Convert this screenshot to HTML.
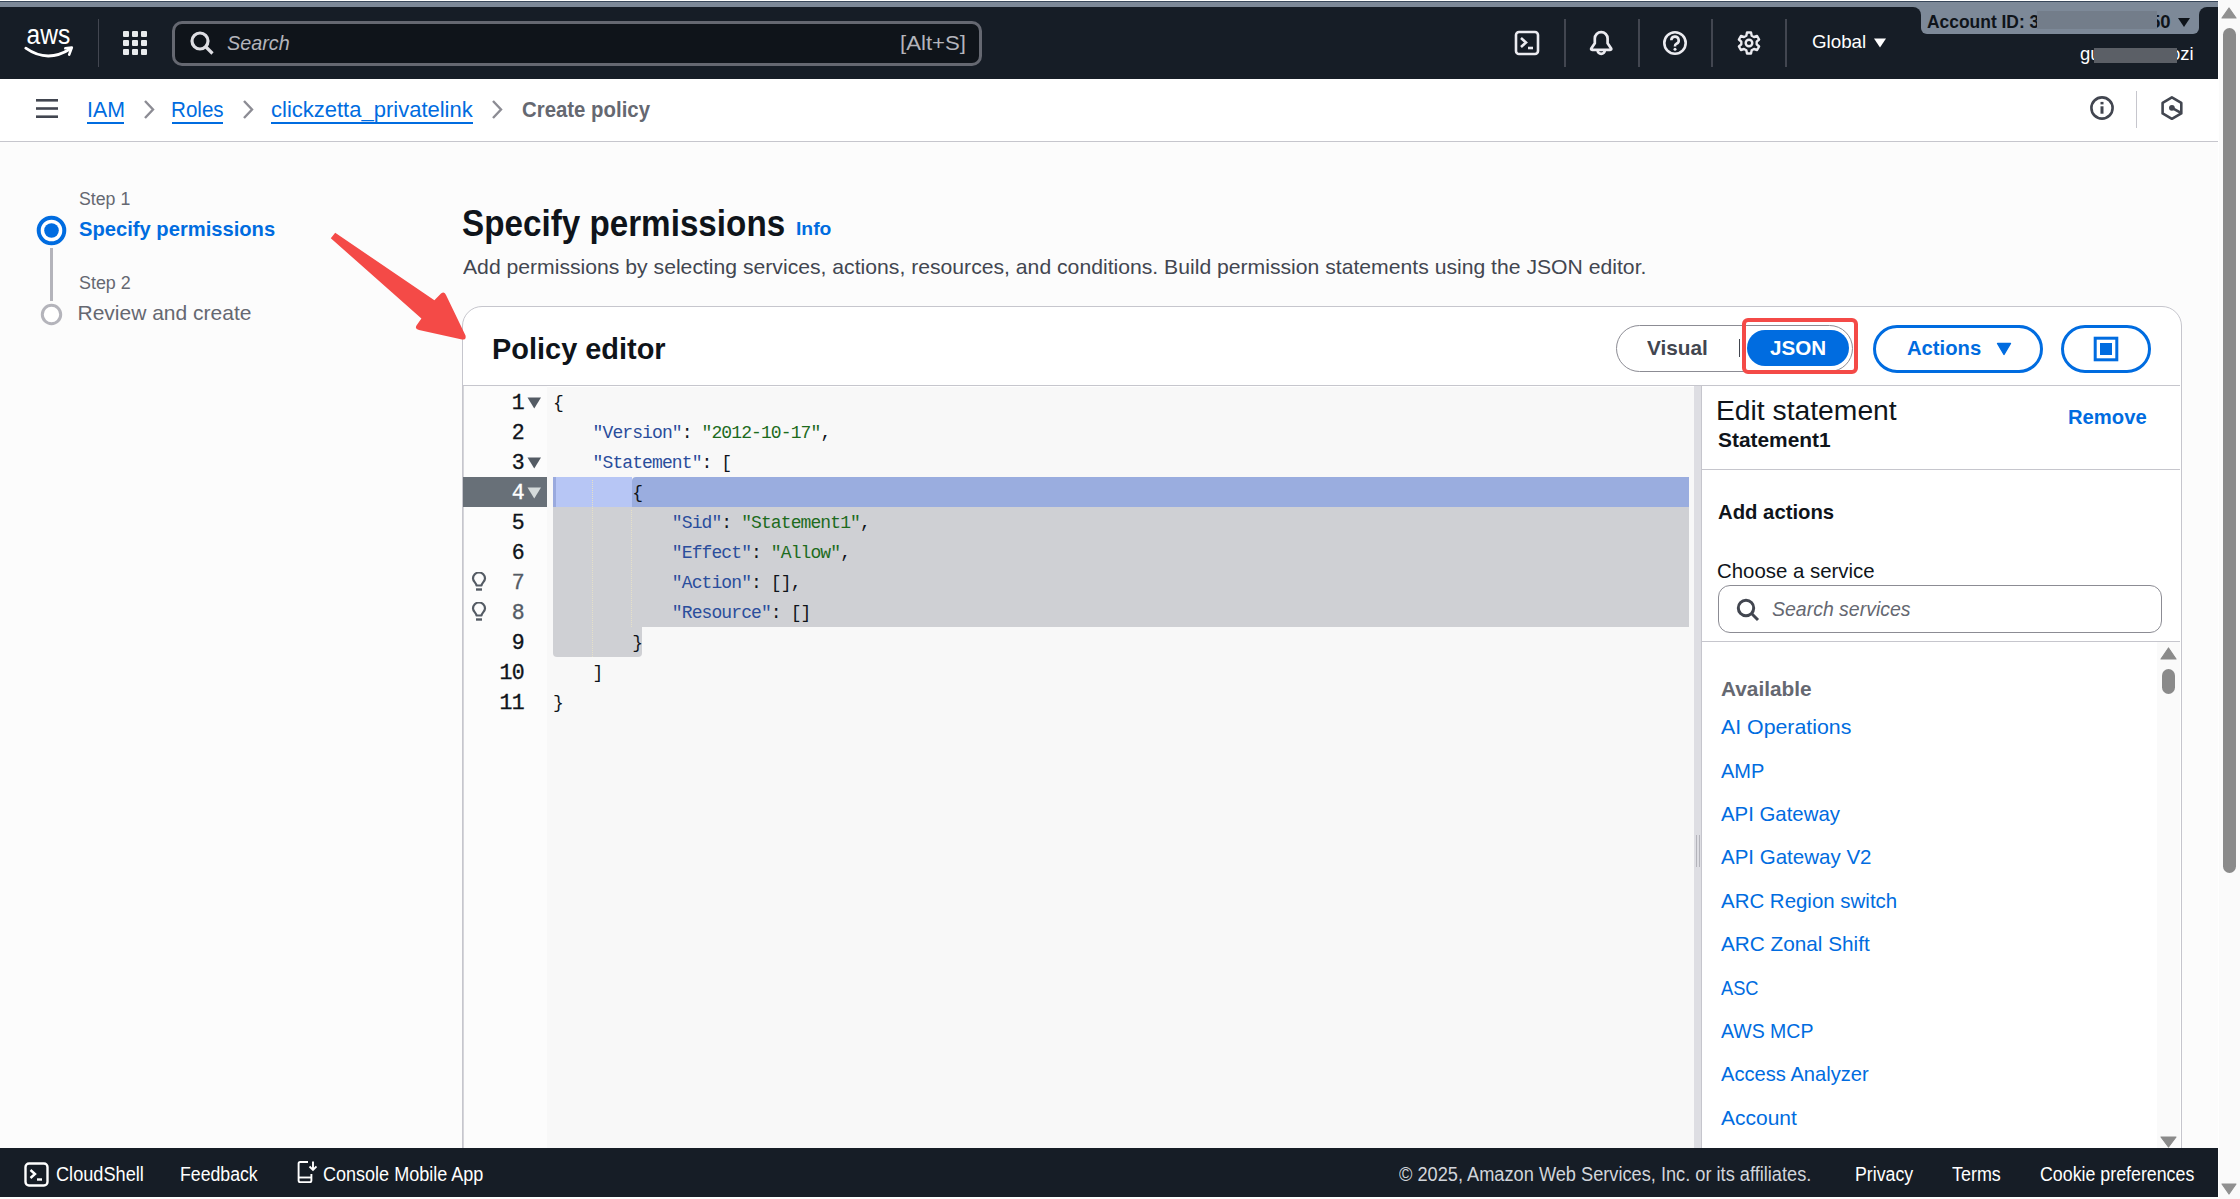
<!DOCTYPE html>
<html><head><meta charset="utf-8">
<style>
*{margin:0;padding:0;box-sizing:border-box}
html,body{width:2240px;height:1199px;overflow:hidden;background:#fcfcfc;font-family:"Liberation Sans",sans-serif}
.a{position:absolute}
.t{position:absolute;white-space:nowrap;line-height:1}
.cl{position:absolute;left:553px;height:30px;line-height:33.2px;font-family:"Liberation Mono",monospace;font-size:18px;letter-spacing:-0.9px;white-space:pre;color:#0f141a}
.ck{color:#2a4d9c}.cs{color:#1d6b1d}.cp{color:#0f141a}
.gn{position:absolute;left:464px;width:60px;height:30px;line-height:33px;text-align:right;font-family:"Liberation Mono",monospace;font-size:21.5px;letter-spacing:-0.6px;-webkit-text-stroke:0.35px currentColor}
</style></head>
<body>
<!-- top gray band -->
<div class="a" style="left:0;top:0;width:2240px;height:1px;background:#ffffff"></div>
<div class="a" style="left:0;top:1px;width:2218px;height:1px;background:#38475a"></div>
<div class="a" style="left:0;top:2px;width:2218px;height:5px;background:#7d8998"></div>
<!-- nav -->
<div class="a" style="left:0;top:7px;width:2218px;height:72px;background:#161d26"></div>
<!-- account badge -->
<div class="a" style="left:1913px;top:7px;width:294px;height:10px;background:#7d8998"></div>
<div class="a" style="left:1905px;top:7px;width:16px;height:16px;background:#161d26;border-top-right-radius:8px"></div>
<div class="a" style="left:2199px;top:7px;width:16px;height:16px;background:#161d26;border-top-left-radius:8px"></div>
<div class="a" style="left:1921px;top:7px;width:278px;height:27px;background:#7d8998;border-radius:0 0 6px 6px"></div>
<svg class="a" style="left:2178px;top:18px" width="12" height="9" viewBox="0 0 12 9"><path d="M0 0H12L6 9Z" fill="#0f141a"/></svg>
<!-- aws logo -->
<svg class="a" style="left:24px;top:27px" width="52" height="32" viewBox="0 0 52 32">
<text x="2.5" y="16.8" font-family="Liberation Sans" font-size="27" fill="#fff" textLength="43.7" lengthAdjust="spacingAndGlyphs">aws</text>
<path d="M1.8 21.2 Q23.5 36.5 46.5 21.8" stroke="#fff" stroke-width="2.8" fill="none" stroke-linecap="round"/>
<path d="M41.3 21.3 L47.8 20.6 L45.2 27.6" stroke="#fff" stroke-width="2.6" fill="none" stroke-linecap="round" stroke-linejoin="round"/>
</svg>
<div class="a" style="left:98px;top:19px;width:1px;height:48px;background:#424650"></div>
<!-- grid icon -->
<svg class="a" style="left:122px;top:30px" width="26" height="26" viewBox="0 0 26 26">
<g fill="#e9ebed">
<rect x="1" y="1" width="6" height="6" rx="1"/><rect x="10" y="1" width="6" height="6" rx="1"/><rect x="19" y="1" width="6" height="6" rx="1"/>
<rect x="1" y="10" width="6" height="6" rx="1"/><rect x="10" y="10" width="6" height="6" rx="1"/><rect x="19" y="10" width="6" height="6" rx="1"/>
<rect x="1" y="19" width="6" height="6" rx="1"/><rect x="10" y="19" width="6" height="6" rx="1"/><rect x="19" y="19" width="6" height="6" rx="1"/>
</g></svg>
<!-- search box -->
<div class="a" style="left:172px;top:21px;width:810px;height:45px;background:#0f141a;border:3px solid #656871;border-radius:10px"></div>
<svg class="a" style="left:189px;top:30px" width="27" height="27" viewBox="0 0 27 27"><circle cx="11" cy="11" r="8" stroke="#dedee3" stroke-width="3.2" fill="none"/><path d="M16.5 16.5L23.5 23.5" stroke="#dedee3" stroke-width="3.2"/></svg>
<!-- right nav icons -->
<svg class="a" style="left:1514px;top:30px" width="26" height="26" viewBox="0 0 26 26"><rect x="2" y="2" width="22" height="22" rx="3" stroke="#ebebf0" stroke-width="2.6" fill="none"/><path d="M7 8L12 12.5L7 17" stroke="#ebebf0" stroke-width="2.6" fill="none"/><path d="M14 18H19" stroke="#ebebf0" stroke-width="2.6"/></svg>
<div class="a" style="left:1563.5px;top:19px;width:2px;height:48px;background:#424650"></div>
<svg class="a" style="left:1588px;top:30px" width="26" height="26" viewBox="0 0 26 26"><path d="M6.8 13.2V8.6A6.4 6.4 0 0 1 19.6 8.6V13.2L23 18.2Q23.9 19.8 22.2 19.8H4.2Q2.5 19.8 3.4 18.2Z" stroke="#ebebf0" stroke-width="2.7" fill="none" stroke-linejoin="round"/><path d="M9.6 20.2A3.6 3.6 0 0 0 16.8 20.2" stroke="#ebebf0" stroke-width="2.7" fill="none"/></svg>
<div class="a" style="left:1638px;top:19px;width:2px;height:48px;background:#424650"></div>
<svg class="a" style="left:1662px;top:30px" width="26" height="26" viewBox="0 0 26 26"><circle cx="13" cy="13" r="10.7" stroke="#ebebf0" stroke-width="2.6" fill="none"/><path d="M9.3 10.3a3.7 3.7 0 1 1 5.2 3.4c-1 .5-1.5 1.2-1.5 2.3v.6" stroke="#ebebf0" stroke-width="2.6" fill="none"/><circle cx="13" cy="19.3" r="1.5" fill="#ebebf0"/></svg>
<div class="a" style="left:1711px;top:19px;width:2px;height:48px;background:#424650"></div>
<svg class="a" style="left:1736px;top:30px" width="26" height="26" viewBox="0 0 26 26"><path d="M11 2.5h4l.7 3.2 2.3 1.3 3.1-1 2 3.5-2.4 2.2v2.6l2.4 2.2-2 3.5-3.1-1-2.3 1.3-.7 3.2h-4l-.7-3.2-2.3-1.3-3.1 1-2-3.5 2.4-2.2v-2.6L2.9 9.5l2-3.5 3.1 1 2.3-1.3Z" stroke="#ebebf0" stroke-width="2.4" fill="none" stroke-linejoin="round"/><circle cx="13" cy="13" r="3.3" stroke="#ebebf0" stroke-width="2.4" fill="none"/></svg>
<div class="a" style="left:1785px;top:19px;width:2px;height:48px;background:#424650"></div>
<svg class="a" style="left:1874px;top:38px" width="12" height="10" viewBox="0 0 12 10"><path d="M0 0.5H12L6 9.5Z" fill="#fff"/></svg>

<!-- breadcrumb bar -->
<div class="a" style="left:0;top:79px;width:2218px;height:63px;background:#fff;border-bottom:1px solid #c6c6cd"></div>
<svg class="a" style="left:36px;top:99px" width="22" height="19" viewBox="0 0 22 19"><g fill="#424650"><rect x="0" y="0" width="22" height="2.6"/><rect x="0" y="8.2" width="22" height="2.6"/><rect x="0" y="16.4" width="22" height="2.6"/></g></svg>
<div class="a" style="left:87px;top:121.5px;width:37px;height:2px;background:#006ce0"></div>
<div class="a" style="left:172px;top:121.5px;width:51px;height:2px;background:#006ce0"></div>
<div class="a" style="left:271px;top:121.5px;width:202px;height:2px;background:#006ce0"></div>
<svg class="a" style="left:142px;top:99px" width="14" height="21" viewBox="0 0 14 21"><path d="M3 2L11 10.5L3 19" stroke="#8c8c94" stroke-width="2.4" fill="none"/></svg>
<svg class="a" style="left:241px;top:99px" width="14" height="21" viewBox="0 0 14 21"><path d="M3 2L11 10.5L3 19" stroke="#8c8c94" stroke-width="2.4" fill="none"/></svg>
<svg class="a" style="left:490px;top:99px" width="14" height="21" viewBox="0 0 14 21"><path d="M3 2L11 10.5L3 19" stroke="#8c8c94" stroke-width="2.4" fill="none"/></svg>
<svg class="a" style="left:2089px;top:95px" width="26" height="26" viewBox="0 0 26 26"><circle cx="13" cy="13" r="10.6" stroke="#424650" stroke-width="2.6" fill="none"/><path d="M13 11.3V18.7" stroke="#424650" stroke-width="3"/><rect x="11.5" y="6.9" width="3" height="2.5" fill="#424650"/></svg>
<div class="a" style="left:2136px;top:91px;width:1px;height:37px;background:#c6c6cd"></div>
<svg class="a" style="left:2159px;top:94px" width="26" height="28" viewBox="0 0 26 28"><path d="M12.9 3.4L22.3 8.9V19.4L12.9 24.8L3.6 19.4V8.9Z" stroke="#424650" stroke-width="2.6" fill="none" stroke-linejoin="round"/><circle cx="12.9" cy="13.8" r="2.9" fill="#424650"/><path d="M12.9 13.8L21.5 18.6" stroke="#424650" stroke-width="2.6"/></svg>

<!-- steps -->
<svg class="a" style="left:36px;top:215px" width="31" height="31" viewBox="0 0 31 31"><circle cx="15.5" cy="15.5" r="12.8" stroke="#006ce0" stroke-width="4" fill="#fff"/><circle cx="15.5" cy="15.5" r="7.3" fill="#006ce0"/></svg>
<div class="a" style="left:49.5px;top:248px;width:3px;height:53px;background:#b4b4bb"></div>
<svg class="a" style="left:40px;top:303px" width="23" height="23" viewBox="0 0 23 23"><circle cx="11.5" cy="11.5" r="9.2" stroke="#b4b4bb" stroke-width="3" fill="#fff"/></svg>

<!-- container -->
<div class="a" style="left:462px;top:306px;width:1719.5px;height:900px;background:#fff;border:1px solid #c6c6cd;border-radius:20px"></div>
<!-- segmented control -->
<div class="a" style="left:1616px;top:325px;width:237px;height:47px;border:1px solid #8c8c94;border-radius:24px;background:#fff"></div>
<div class="a" style="left:1739px;top:339px;width:1px;height:18px;background:#424650"></div>
<div class="a" style="left:1747px;top:330px;width:102px;height:36px;background:#006ce0;border-radius:18px"></div>
<!-- red rect -->
<div class="a" style="left:1742px;top:318px;width:116px;height:56px;border:4px solid #f44a47;border-radius:6px"></div>
<!-- actions btn -->
<div class="a" style="left:1873px;top:325px;width:170px;height:47.5px;border:3px solid #006ce0;border-radius:24px"></div>
<svg class="a" style="left:1996px;top:342px" width="16" height="14" viewBox="0 0 16 14"><path d="M1.5 1.5H14.5L8 12.5Z" fill="#006ce0" stroke="#006ce0" stroke-width="1.4" stroke-linejoin="round"/></svg>
<div class="a" style="left:2061px;top:325px;width:90px;height:47.5px;border:3px solid #006ce0;border-radius:24px"></div>
<svg class="a" style="left:2093px;top:336px" width="26" height="26" viewBox="0 0 26 26"><rect x="2.2" y="2.2" width="21.6" height="21.6" stroke="#006ce0" stroke-width="3" fill="none"/><rect x="7" y="7" width="12" height="12" fill="#006ce0"/></svg>

<!-- editor area -->
<div class="a" style="left:463px;top:385px;width:1717px;height:1px;background:#c6c6cd"></div>
<div class="a" style="left:463px;top:386px;width:84px;height:762px;background:#fcfcfc"></div>
<div class="a" style="left:547px;top:387px;width:1147px;height:761px;background:#f8f8f8"></div>
<div class="a" style="left:463px;top:386px;width:1px;height:762px;background:#d5d5da"></div>
<!-- gutter active -->
<div class="a" style="left:463px;top:477px;width:84px;height:30px;background:#687078"></div>
<!-- selection -->
<div class="a" style="left:553px;top:477px;width:79px;height:30px;background:#b7c6f5;border-top-left-radius:3px"></div>
<div class="a" style="left:553px;top:477px;width:3px;height:30px;background:#9aaade"></div>
<div class="a" style="left:632px;top:477px;width:1057px;height:30px;background:#9aaddf;border-top-left-radius:4px"></div>
<div class="a" style="left:553px;top:507px;width:1136px;height:120px;background:#cfd0d4"></div>
<div class="a" style="left:553px;top:627px;width:89px;height:30px;background:#cfd0d4;border-radius:0 0 4px 4px"></div>
<!-- indent guides -->
<div class="a" style="left:592px;top:480px;width:0;height:177px;border-left:1px dotted #e6e0c8"></div>
<div class="a" style="left:631px;top:510px;width:0;height:117px;border-left:1px dotted #e6e0c8"></div>
<!-- fold arrows -->
<svg class="a" style="left:527px;top:397px" width="15" height="12" viewBox="0 0 15 12"><path d="M0.5 0.5H14L7.25 11.5Z" fill="#545b64"/></svg>
<svg class="a" style="left:527px;top:457px" width="15" height="12" viewBox="0 0 15 12"><path d="M0.5 0.5H14L7.25 11.5Z" fill="#545b64"/></svg>
<svg class="a" style="left:527px;top:487px" width="15" height="12" viewBox="0 0 15 12"><path d="M0.5 0.5H14L7.25 11.5Z" fill="#d5dbdb"/></svg>
<!-- bulbs -->
<svg class="a" style="left:471px;top:572px" width="16" height="20" viewBox="0 0 16 20"><path d="M5.5 13.5C5.5 11 2 9.5 2 6.5a6 6 0 0 1 12 0c0 3-3.5 4.5-3.5 7Z" stroke="#545b64" stroke-width="2.2" fill="none" stroke-linejoin="round"/><path d="M5 17.5H11" stroke="#545b64" stroke-width="2.4"/></svg>
<svg class="a" style="left:471px;top:602px" width="16" height="20" viewBox="0 0 16 20"><path d="M5.5 13.5C5.5 11 2 9.5 2 6.5a6 6 0 0 1 12 0c0 3-3.5 4.5-3.5 7Z" stroke="#545b64" stroke-width="2.2" fill="none" stroke-linejoin="round"/><path d="M5 17.5H11" stroke="#545b64" stroke-width="2.4"/></svg>
<div class="gn" style="top:387px;color:#0f141a">1</div>
<div class="gn" style="top:417px;color:#0f141a">2</div>
<div class="gn" style="top:447px;color:#0f141a">3</div>
<div class="gn" style="top:477px;color:#ffffff">4</div>
<div class="gn" style="top:507px;color:#0f141a">5</div>
<div class="gn" style="top:537px;color:#0f141a">6</div>
<div class="gn" style="top:567px;color:#545b64">7</div>
<div class="gn" style="top:597px;color:#545b64">8</div>
<div class="gn" style="top:627px;color:#0f141a">9</div>
<div class="gn" style="top:657px;color:#0f141a">10</div>
<div class="gn" style="top:687px;color:#0f141a">11</div>
<div class="cl" style="top:387px"><span class="cp">{</span></div>
<div class="cl" style="top:417px"><span class="cp">&nbsp;&nbsp;&nbsp;&nbsp;</span><span class="ck">"Version"</span><span class="cp">:&nbsp;</span><span class="cs">"2012-10-17"</span><span class="cp">,</span></div>
<div class="cl" style="top:447px"><span class="cp">&nbsp;&nbsp;&nbsp;&nbsp;</span><span class="ck">"Statement"</span><span class="cp">:&nbsp;[</span></div>
<div class="cl" style="top:477px"><span class="cp">&nbsp;&nbsp;&nbsp;&nbsp;&nbsp;&nbsp;&nbsp;&nbsp;{</span></div>
<div class="cl" style="top:507px"><span class="cp">&nbsp;&nbsp;&nbsp;&nbsp;&nbsp;&nbsp;&nbsp;&nbsp;&nbsp;&nbsp;&nbsp;&nbsp;</span><span class="ck">"Sid"</span><span class="cp">:&nbsp;</span><span class="cs">"Statement1"</span><span class="cp">,</span></div>
<div class="cl" style="top:537px"><span class="cp">&nbsp;&nbsp;&nbsp;&nbsp;&nbsp;&nbsp;&nbsp;&nbsp;&nbsp;&nbsp;&nbsp;&nbsp;</span><span class="ck">"Effect"</span><span class="cp">:&nbsp;</span><span class="cs">"Allow"</span><span class="cp">,</span></div>
<div class="cl" style="top:567px"><span class="cp">&nbsp;&nbsp;&nbsp;&nbsp;&nbsp;&nbsp;&nbsp;&nbsp;&nbsp;&nbsp;&nbsp;&nbsp;</span><span class="ck">"Action"</span><span class="cp">:&nbsp;[],</span></div>
<div class="cl" style="top:597px"><span class="cp">&nbsp;&nbsp;&nbsp;&nbsp;&nbsp;&nbsp;&nbsp;&nbsp;&nbsp;&nbsp;&nbsp;&nbsp;</span><span class="ck">"Resource"</span><span class="cp">:&nbsp;[]</span></div>
<div class="cl" style="top:627px"><span class="cp">&nbsp;&nbsp;&nbsp;&nbsp;&nbsp;&nbsp;&nbsp;&nbsp;}</span></div>
<div class="cl" style="top:657px"><span class="cp">&nbsp;&nbsp;&nbsp;&nbsp;]</span></div>
<div class="cl" style="top:687px"><span class="cp">}</span></div>
<!-- splitter -->
<div class="a" style="left:1694px;top:386px;width:8px;height:762px;background:#dedee3"></div>
<div class="a" style="left:1701px;top:386px;width:1px;height:762px;background:#c6c6cd"></div>
<div class="a" style="left:1696px;top:835px;width:1px;height:32px;background:#b4b4bb"></div>
<div class="a" style="left:1699px;top:835px;width:1px;height:32px;background:#b4b4bb"></div>
<!-- right panel -->
<div class="a" style="left:1702px;top:386px;width:478px;height:762px;background:#fff"></div>
<div class="a" style="left:1702px;top:469px;width:478px;height:1px;background:#c6c6cd"></div>
<div class="a" style="left:1718px;top:585px;width:444px;height:48px;border:1px solid #8c8c94;border-radius:12px;background:#fff"></div>
<svg class="a" style="left:1735px;top:597px" width="26" height="26" viewBox="0 0 26 26"><circle cx="11" cy="11" r="7.7" stroke="#424650" stroke-width="3" fill="none"/><path d="M16.3 16.3L23 23" stroke="#424650" stroke-width="3"/></svg>
<div class="a" style="left:1702px;top:641px;width:478px;height:1px;background:#c6c6cd"></div>
<!-- inner scrollbar -->
<div class="a" style="left:2157px;top:642px;width:23px;height:506px;background:#fafafa"></div>
<svg class="a" style="left:2160px;top:647px" width="17" height="13" viewBox="0 0 17 13"><path d="M8.5 1L16 12H1Z" fill="#8a8a8a" stroke="#8a8a8a" stroke-linejoin="round" stroke-width="1.2"/></svg>
<div class="a" style="left:2162px;top:669px;width:13px;height:25px;background:#8a8a8a;border-radius:6.5px"></div>
<svg class="a" style="left:2160px;top:1136px" width="17" height="12" viewBox="0 0 17 12"><path d="M1 1H16L8.5 11Z" fill="#8a8a8a" stroke="#8a8a8a" stroke-linejoin="round" stroke-width="1.2"/></svg>

<!-- footer -->
<div class="a" style="left:0;top:1148px;width:2218px;height:49.5px;background:#161d26"></div>
<div class="a" style="left:0;top:1197px;width:2218px;height:2px;background:#fcfcfc"></div>
<svg class="a" style="left:24px;top:1162px" width="25" height="25" viewBox="0 0 25 25"><rect x="1.5" y="1.5" width="22" height="22" rx="3.5" stroke="#fff" stroke-width="2.4" fill="none"/><path d="M6.5 8L11 12L6.5 16" stroke="#fff" stroke-width="2.4" fill="none"/><path d="M13 17.5H18" stroke="#fff" stroke-width="2.4"/></svg>
<svg class="a" style="left:297px;top:1160px" width="20" height="24" viewBox="0 0 20 24"><path d="M11 2H3.2C2.4 2 1.6 2.7 1.6 3.6V20.5c0 .9.7 1.6 1.6 1.6h9.6c.9 0 1.6-.7 1.6-1.6V14" stroke="#fff" stroke-width="1.9" fill="none"/><path d="M1.6 17.5H14" stroke="#fff" stroke-width="1.9"/><path d="M16 1.5V10M12.5 6.5L16 10L19.5 6.5" stroke="#fff" stroke-width="1.9" fill="none"/></svg>


<div class="t" id="search" style="left:227.00px;top:32.22px;font-size:21.00px;font-weight:400;color:#b4b4bb;font-style:italic;transform:scaleX(0.9414);transform-origin:0 0;">Search</div>
<div class="t" id="alts" style="left:899.94px;top:32.22px;font-size:21.00px;font-weight:400;color:#b4b4bb;transform:scaleX(1.0559);transform-origin:0 0;">[Alt+S]</div>
<div class="t" id="global" style="left:1812.00px;top:33.04px;font-size:18.50px;font-weight:400;color:#ffffff;transform:scaleX(1.0121);transform-origin:0 0;">Global</div>
<div class="t" id="acct" style="left:1927.00px;top:13.14px;font-size:18.50px;font-weight:700;color:#0f141a;transform:scaleX(0.9416);transform-origin:0 0;">Account ID: 3</div>
<div class="t" id="acct50" style="left:2150.00px;top:13.14px;font-size:18.50px;font-weight:700;color:#0f141a;">50</div>
<div class="t" id="user" style="left:2080.00px;top:45.34px;font-size:18.50px;font-weight:400;color:#ffffff;">gu</div>
<div class="t" id="user2" style="left:2170.00px;top:45.34px;font-size:18.50px;font-weight:400;color:#ffffff;">ozi</div>
<div class="t" id="bc1" style="left:86.51px;top:99.80px;font-size:21.50px;font-weight:400;color:#006ce0;transform:scaleX(0.9914);transform-origin:0 0;">IAM</div>
<div class="t" id="bc2" style="left:171.04px;top:99.80px;font-size:21.50px;font-weight:400;color:#006ce0;transform:scaleX(0.9583);transform-origin:0 0;">Roles</div>
<div class="t" id="bc3" style="left:271.00px;top:99.80px;font-size:21.50px;font-weight:400;color:#006ce0;transform:scaleX(1.0232);transform-origin:0 0;">clickzetta_privatelink</div>
<div class="t" id="bc4" style="left:522.00px;top:99.80px;font-size:21.50px;font-weight:700;color:#656871;transform:scaleX(0.9477);transform-origin:0 0;">Create policy</div>
<div class="t" id="s1" style="left:78.50px;top:191.19px;font-size:17.50px;font-weight:400;color:#656871;transform:scaleX(1.0128);transform-origin:0 0;">Step 1</div>
<div class="t" id="s1b" style="left:78.50px;top:218.22px;font-size:21.00px;font-weight:700;color:#006ce0;transform:scaleX(0.9604);transform-origin:0 0;">Specify permissions</div>
<div class="t" id="s2" style="left:78.50px;top:275.39px;font-size:17.50px;font-weight:400;color:#656871;transform:scaleX(1.0228);transform-origin:0 0;">Step 2</div>
<div class="t" id="s2b" style="left:77.50px;top:302.22px;font-size:21.00px;font-weight:400;color:#656871;">Review and create</div>
<div class="t" id="h1" style="left:461.61px;top:205.26px;font-size:37.50px;font-weight:700;color:#0f141a;transform:scaleX(0.8860);transform-origin:0 0;">Specify permissions</div>
<div class="t" id="info" style="left:795.96px;top:220.34px;font-size:18.50px;font-weight:700;color:#006ce0;transform:scaleX(1.0429);transform-origin:0 0;">Info</div>
<div class="t" id="desc" style="left:462.50px;top:255.72px;font-size:21.00px;font-weight:400;color:#424650;transform:scaleX(1.0078);transform-origin:0 0;">Add permissions by selecting services, actions, resources, and conditions. Build permission statements using the JSON editor.</div>
<div class="t" id="pe" style="left:492.07px;top:333.61px;font-size:30.00px;font-weight:700;color:#0f141a;transform:scaleX(0.9643);transform-origin:0 0;">Policy editor</div>
<div class="t" id="visual" style="left:1647.00px;top:337.22px;font-size:21.00px;font-weight:700;color:#424650;transform:scaleX(0.9893);transform-origin:0 0;">Visual</div>
<div class="t" id="json" style="left:1770.00px;top:337.22px;font-size:21.00px;font-weight:700;color:#ffffff;transform:scaleX(0.9818);transform-origin:0 0;">JSON</div>
<div class="t" id="actions" style="left:1906.50px;top:337.22px;font-size:21.00px;font-weight:700;color:#006ce0;transform:scaleX(0.9630);transform-origin:0 0;">Actions</div>
<div class="t" id="edst" style="left:1715.94px;top:396.72px;font-size:27.50px;font-weight:400;color:#0f141a;transform:scaleX(1.0279);transform-origin:0 0;">Edit statement</div>
<div class="t" id="st1" style="left:1718.00px;top:429.22px;font-size:21.00px;font-weight:700;color:#0f141a;transform:scaleX(0.9954);transform-origin:0 0;">Statement1</div>
<div class="t" id="remove" style="left:2068.04px;top:406.22px;font-size:21.00px;font-weight:700;color:#006ce0;transform:scaleX(0.9622);transform-origin:0 0;">Remove</div>
<div class="t" id="addact" style="left:1718.00px;top:500.72px;font-size:21.00px;font-weight:700;color:#0f141a;transform:scaleX(0.9666);transform-origin:0 0;">Add actions</div>
<div class="t" id="choose" style="left:1717.03px;top:559.62px;font-size:21.00px;font-weight:400;color:#0f141a;transform:scaleX(0.9715);transform-origin:0 0;">Choose a service</div>
<div class="t" id="srchsvc" style="left:1772.00px;top:598.22px;font-size:21.00px;font-weight:400;color:#656871;font-style:italic;transform:scaleX(0.9274);transform-origin:0 0;">Search services</div>
<div class="t" id="avail" style="left:1721.00px;top:677.72px;font-size:21.00px;font-weight:700;color:#656871;transform:scaleX(0.9917);transform-origin:0 0;">Available</div>
<div class="t" id="svc0" style="left:1721.00px;top:716.22px;font-size:21.00px;font-weight:400;color:#006ce0;transform:scaleX(1.0149);transform-origin:0 0;">AI Operations</div>
<div class="t" id="svc1" style="left:1721.00px;top:759.62px;font-size:21.00px;font-weight:400;color:#006ce0;transform:scaleX(0.9528);transform-origin:0 0;">AMP</div>
<div class="t" id="svc2" style="left:1721.00px;top:803.02px;font-size:21.00px;font-weight:400;color:#006ce0;transform:scaleX(0.9703);transform-origin:0 0;">API Gateway</div>
<div class="t" id="svc3" style="left:1721.00px;top:846.42px;font-size:21.00px;font-weight:400;color:#006ce0;transform:scaleX(0.9766);transform-origin:0 0;">API Gateway V2</div>
<div class="t" id="svc4" style="left:1721.00px;top:889.82px;font-size:21.00px;font-weight:400;color:#006ce0;transform:scaleX(0.9738);transform-origin:0 0;">ARC Region switch</div>
<div class="t" id="svc5" style="left:1721.00px;top:933.22px;font-size:21.00px;font-weight:400;color:#006ce0;transform:scaleX(0.9879);transform-origin:0 0;">ARC Zonal Shift</div>
<div class="t" id="svc6" style="left:1721.00px;top:976.62px;font-size:21.00px;font-weight:400;color:#006ce0;transform:scaleX(0.8695);transform-origin:0 0;">ASC</div>
<div class="t" id="svc7" style="left:1721.00px;top:1020.02px;font-size:21.00px;font-weight:400;color:#006ce0;transform:scaleX(0.9285);transform-origin:0 0;">AWS MCP</div>
<div class="t" id="svc8" style="left:1721.00px;top:1063.42px;font-size:21.00px;font-weight:400;color:#006ce0;transform:scaleX(0.9592);transform-origin:0 0;">Access Analyzer</div>
<div class="t" id="svc9" style="left:1721.00px;top:1106.82px;font-size:21.00px;font-weight:400;color:#006ce0;">Account</div>
<div class="t" id="f1" style="left:55.60px;top:1164.99px;font-size:19.50px;font-weight:400;color:#ffffff;transform:scaleX(0.9311);transform-origin:0 0;">CloudShell</div>
<div class="t" id="f2" style="left:180.09px;top:1164.99px;font-size:19.50px;font-weight:400;color:#ffffff;transform:scaleX(0.9071);transform-origin:0 0;">Feedback</div>
<div class="t" id="f3" style="left:323.00px;top:1164.99px;font-size:19.50px;font-weight:400;color:#ffffff;transform:scaleX(0.9246);transform-origin:0 0;">Console Mobile App</div>
<div class="t" id="f4" style="left:1399.00px;top:1164.99px;font-size:19.50px;font-weight:400;color:#d1d5db;transform:scaleX(0.9333);transform-origin:0 0;">© 2025, Amazon Web Services, Inc. or its affiliates.</div>
<div class="t" id="f5" style="left:1855.09px;top:1164.99px;font-size:19.50px;font-weight:400;color:#ffffff;transform:scaleX(0.9101);transform-origin:0 0;">Privacy</div>
<div class="t" id="f6" style="left:1952.00px;top:1164.99px;font-size:19.50px;font-weight:400;color:#ffffff;transform:scaleX(0.9188);transform-origin:0 0;">Terms</div>
<div class="t" id="f7" style="left:2039.50px;top:1164.99px;font-size:19.50px;font-weight:400;color:#ffffff;transform:scaleX(0.9124);transform-origin:0 0;">Cookie preferences</div>
<div class="a" style="left:2037px;top:11px;width:120px;height:18px;background:#737d8a"></div>
<div class="a" style="left:2094px;top:48px;width:83px;height:15px;background:#5b5f66"></div>


<!-- red arrow -->
<svg class="a" style="left:0;top:0" width="500" height="360" viewBox="0 0 500 360"><path d="M335.2 232.8L330.8 238.2L421.4 318.6L416.5 325.5Q414.5 329 419 330L462 339.5Q466.5 340 465.5 335.5L446 295Q444.5 290.8 441 293.5L434.4 300.2Z" fill="#f44a47"/></svg>

<!-- browser scrollbar -->
<div class="a" style="left:2218px;top:0;width:1px;height:1199px;background:#ffffff"></div>
<div class="a" style="left:2219px;top:0;width:21px;height:1199px;background:#fafafa"></div>
<svg class="a" style="left:2221px;top:7px" width="16" height="12" viewBox="0 0 16 12"><path d="M8 1L15 11H1Z" fill="#909090" stroke="#909090" stroke-linejoin="round" stroke-width="1.2"/></svg>
<div class="a" style="left:2222.5px;top:28px;width:13.5px;height:845px;background:#8a8a8a;border-radius:7px"></div>
<svg class="a" style="left:2221px;top:1182.5px" width="16" height="12" viewBox="0 0 16 12"><path d="M1 1H15L8 11Z" fill="#909090" stroke="#909090" stroke-linejoin="round" stroke-width="1.2"/></svg>
</body></html>
